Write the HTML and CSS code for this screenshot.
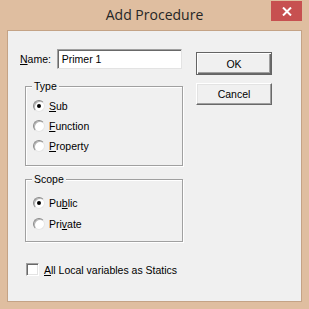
FILE: index.html
```html
<!DOCTYPE html>
<html>
<head>
<meta charset="utf-8">
<link rel="stylesheet" href="styles.css">
</head>
<body>
<div class="window">
  <div class="titlebar">
    <span class="title">Add Procedure</span>
    <div class="close">
      <svg width="10" height="9" viewBox="0 0 10 9"><path d="M1 0.5 L9 8.5 M9 0.5 L1 8.5" stroke="#fff" stroke-width="2"/></svg>
    </div>
  </div>
  <div class="client">
    <div class="main">
      <div class="name-row">
        <span class="label"><u>N</u>ame:</span>
        <div class="textbox">Primer 1</div>
      </div>
      <div class="group type">
        <span class="legend">Type</span>
        <div class="option"><span class="radio checked"></span><span><u>S</u>ub</span></div>
        <div class="option"><span class="radio"></span><span><u>F</u>unction</span></div>
        <div class="option"><span class="radio"></span><span><u>P</u>roperty</span></div>
      </div>
      <div class="group scope">
        <span class="legend">Scope</span>
        <div class="option"><span class="radio checked"></span><span>Pu<u>b</u>lic</span></div>
        <div class="option"><span class="radio"></span><span>Pri<u>v</u>ate</span></div>
      </div>
      <div class="check-row">
        <span class="checkbox"></span>
        <span><u>A</u>ll Local variables as Statics</span>
      </div>
    </div>
    <div class="buttons">
      <div class="btn default">OK</div>
      <div class="btn">Cancel</div>
    </div>
  </div>
</div>
</body>
</html>
```
FILE: styles.css
```css
html, body {
  margin: 0;
  padding: 0;
}
body {
  font-family: "Liberation Sans", Arial, sans-serif;
  font-size: 10.5px;
  color: #000;
}
.window {
  width: 309px;
  height: 309px;
  background: #dfbea0;
  display: flex;
  flex-direction: column;
  position: relative;
  box-sizing: border-box;
}
.titlebar {
  height: 30px;
  display: flex;
  justify-content: center;
  align-items: center;
}
.title {
  font-family: "Open Sans", sans-serif;
  font-size: 14px;
  color: #262626;
  margin-top: -1px;
}
.close {
  position: absolute;
  top: 1px;
  left: 271px;
  width: 31px;
  height: 20px;
  background: #c75050;
  display: flex;
  align-items: center;
  justify-content: center;
}
.client {
  margin: 0 7px 7px 7px;
  flex: 1;
  border: 1px solid #c4a386;
  background: #f0f0f0;
  display: flex;
}
.main {
  margin-left: 12px;
  padding-top: 18px;
  width: 162px;
  display: flex;
  flex-direction: column;
}
.name-row {
  display: flex;
  align-items: center;
  height: 20px;
}
.label {
  width: 37px;
}
.textbox {
  width: 126px;
  height: 20px;
  box-sizing: border-box;
  background: #fff;
  border: 1px solid;
  border-color: #a0a0a0 #e3e3e3 #e3e3e3 #a0a0a0;
  box-shadow: inset 1px 1px 0 #696969;
  padding: 0 0 0 4px;
  display: flex;
  align-items: center;
}
.group {
  position: relative;
  margin-left: 5px;
  width: 158px;
  box-sizing: border-box;
  border: 1px solid #a0a0a0;
  box-shadow: 1px 1px 0 #fff, inset 1px 1px 0 #fff;
  padding-left: 7px;
  display: flex;
  flex-direction: column;
}
.legend {
  position: absolute;
  top: -7px;
  left: 6px;
  padding: 0 2px;
  background: #f0f0f0;
  line-height: 12px;
}
.type {
  margin-top: 17px;
  height: 80px;
  padding-top: 9px;
}
.scope {
  margin-top: 13px;
  height: 63px;
  padding-top: 13px;
  gap: 1px;
}
.option {
  display: flex;
  align-items: center;
  height: 20px;
  gap: 4px;
}
.radio {
  width: 12px;
  height: 12px;
  box-sizing: border-box;
  border-radius: 50%;
  border: 1px solid;
  border-color: #8a8a8a #e6e6e6 #e6e6e6 #8a8a8a;
  background: #fff;
  box-shadow: inset 1px 1px 0 #b5b5b5;
  display: flex;
  align-items: center;
  justify-content: center;
}
.radio.checked::after {
  content: "";
  width: 4px;
  height: 4px;
  border-radius: 50%;
  background: #000;
}
.check-row {
  margin-top: 21px;
  margin-left: 6px;
  display: flex;
  align-items: center;
  height: 13px;
  gap: 5px;
}
.checkbox {
  width: 13px;
  height: 13px;
  box-sizing: border-box;
  background: #fff;
  border: 1px solid;
  border-color: #a0a0a0 #fff #fff #a0a0a0;
  box-shadow: inset 1px 1px 0 #696969, inset -1px -1px 0 #e3e3e3;
}
.buttons {
  margin-left: 14px;
  padding-top: 21px;
  display: flex;
  flex-direction: column;
}
.btn {
  width: 76px;
  height: 22px;
  box-sizing: border-box;
  background: #f0f0f0;
  border: 1px solid;
  border-color: #fff #696969 #696969 #fff;
  box-shadow: inset -1px -1px 0 #a0a0a0, inset 1px 1px 0 #e3e3e3;
  display: flex;
  align-items: center;
  justify-content: center;
}
.btn.default {
  height: 23px;
  margin-bottom: 8px;
  border: 1px solid #646464;
  box-shadow: inset 1px 1px 0 #fff, inset -1px -1px 0 #696969, inset -2px -2px 0 #a0a0a0;
}
```
